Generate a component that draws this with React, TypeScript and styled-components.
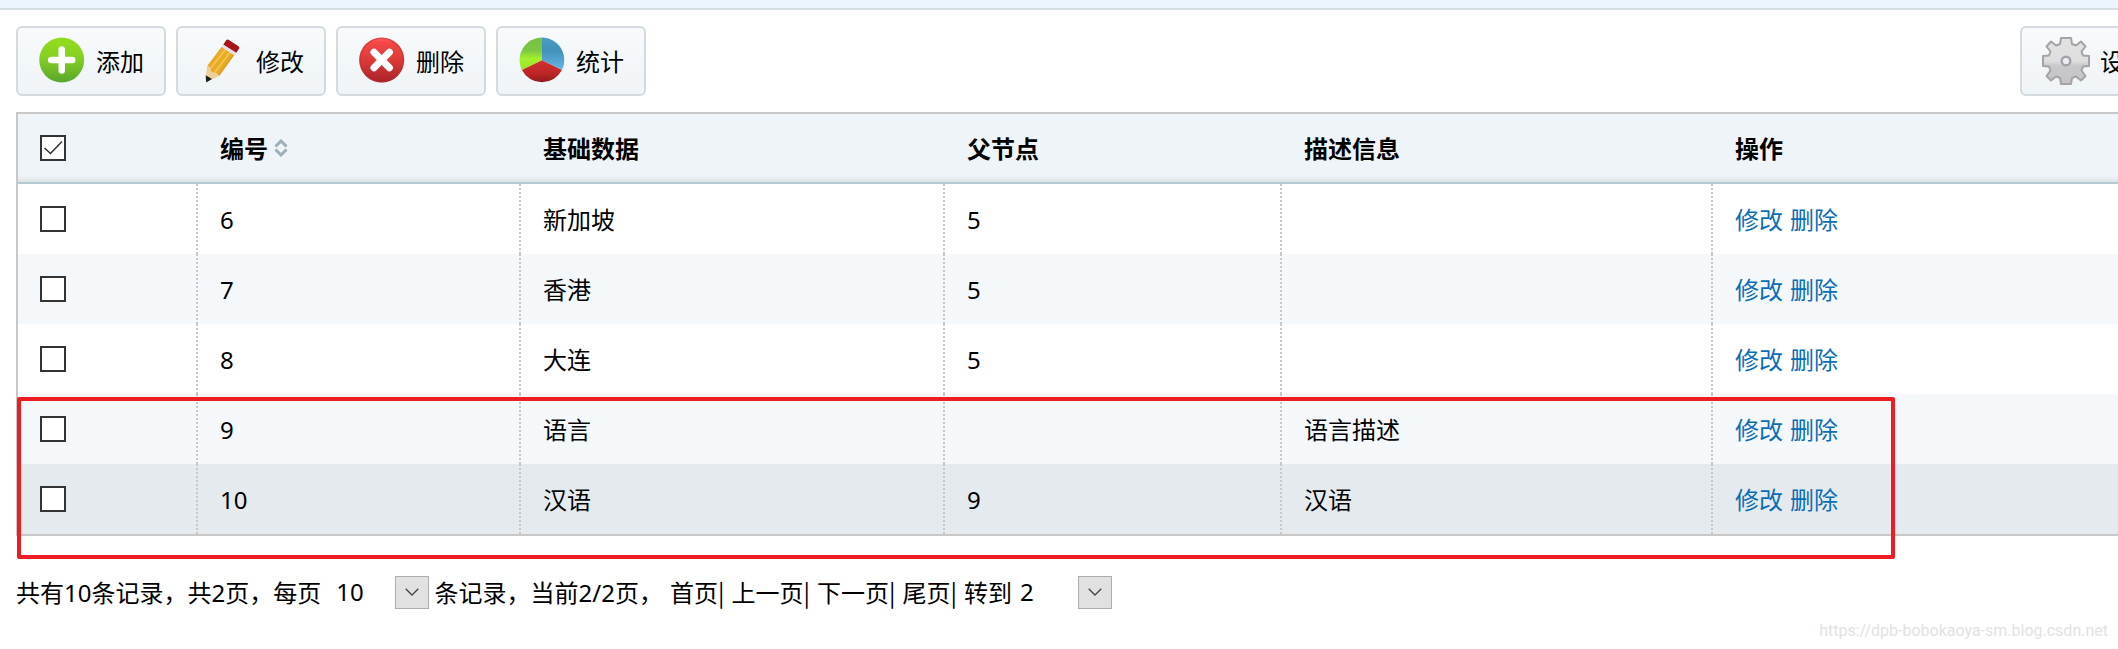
import React, { useState } from "react";
import styled, { createGlobalStyle } from "styled-components";

const GlobalStyle = createGlobalStyle`
  * { box-sizing: border-box; }
  body {
    margin: 0;
    background: #fff;
    color: #000;
    font-family: "Noto Sans CJK SC", "Liberation Sans", sans-serif;
    font-size: 24px;
    line-height: 34px;
  }
  button, select { font: inherit; color: inherit; }
`;

const Page = styled.div`
  position: relative;
  min-height: 100vh;
  overflow: hidden;
`;

const TopStrip = styled.div`
  height: 10px;
  background: #edf5fc;
  border-bottom: 2px solid #d3dfe3;
`;

/* The panel is wider than the viewport and runs off its right edge. */
const Panel = styled.main`
  margin-right: -68px;
  padding: 16px;
`;

const Toolbar = styled.div`
  display: flex;
  gap: 10px;
  margin-bottom: 16px;
`;

const ToolButton = styled.button<{ $end?: boolean }>`
  display: flex;
  align-items: center;
  gap: 10px;
  height: 70px;
  padding: 0 20px;
  border: 2px solid #d3dbde;
  border-radius: 6px;
  background: linear-gradient(#f8fafb, #eff4f7);
  white-space: nowrap;
  cursor: pointer;
  margin-left: ${(p) => (p.$end ? "auto" : "0")};
`;

const Icon = styled.svg`
  display: block;
  flex: none;
  width: 48px;
  height: 48px;
`;

const TableFrame = styled.div`
  position: relative;
  border: 2px solid #c8c8c8;
`;

const DataTable = styled.table`
  width: 100%;
  table-layout: fixed;
  border-collapse: separate;
  border-spacing: 0;
`;

const Col = styled.col<{ $width?: number }>`
  width: ${(p) => (p.$width ? `${p.$width}px` : "auto")};
`;

const HeadCell = styled.th`
  height: 70px;
  padding: 0 22px;
  text-align: left;
  font-weight: 700;
  background: linear-gradient(transparent 62px, #dde2e4 68px), #eef4f7;
  border-bottom: 2px solid #b6cad2;
`;

const SortLabel = styled.span`
  display: flex;
  align-items: center;
  gap: 6px;
`;

const SortIcon = styled.svg`
  width: 14px;
  height: 18px;
`;

const Row = styled.tr<{ $tone: "plain" | "alt" | "hover" }>`
  background: ${(p) => ({ plain: "#fff", alt: "#f4f8fb", hover: "#e5eaee" })[p.$tone]};
`;

const Cell = styled.td`
  height: 70px;
  padding: 0 22px;
  &:not(:last-child) {
    background: repeating-linear-gradient(#c8c8c8 0 2px, transparent 2px 4px) right / 2px 100% no-repeat;
  }
`;

const Num = styled.span`
  font-family: "Noto Sans", "Liberation Sans", sans-serif;
  line-height: 1;
`;

const CheckWrap = styled.label`
  display: grid;
  width: 26px;
  height: 26px;
  > * { grid-area: 1 / 1; }
`;

const CheckBox = styled.input`
  appearance: none;
  width: 26px;
  height: 26px;
  margin: 0;
  border: 2px solid #333;
  background: #fff;
  & + svg { visibility: hidden; pointer-events: none; z-index: 1; }
  &:checked + svg { visibility: visible; }
`;

const ActionLink = styled.a`
  color: #0b6db7;
  text-decoration: none;
  & + & { margin-left: 7px; }
`;

const Highlight = styled.div`
  position: absolute;
  left: -1px;
  right: 273px;
  top: 283px;
  bottom: -25px;
  border: 4px solid #ee1c25;
  border-radius: 2px;
  pointer-events: none;
`;

const Pager = styled.div`
  display: flex;
  align-items: center;
  margin-top: 39px;
  white-space: nowrap;
`;

const PagerText = styled.span<{ $tight?: boolean }>`
  margin-right: ${(p) => (p.$tight ? "0" : "7px")};
`;

const PageLink = styled.a`
  color: inherit;
  text-decoration: none;
`;

const SelectWrap = styled.span<{ $width: number }>`
  display: grid;
  width: ${(p) => p.$width}px;
  align-items: center;
  > * { grid-area: 1 / 1; }
`;

const Select = styled.select`
  appearance: none;
  width: 100%;
  height: 34px;
  padding: 0 40px 0 8px;
  border: 0;
  background: transparent;
  font-family: "Noto Sans", "Liberation Sans", sans-serif;
`;

const SelectArrow = styled.span`
  display: grid;
  place-items: center;
  justify-self: end;
  width: 34px;
  height: 33px;
  border: 1px solid #adadad;
  background: #e1e1e1;
  pointer-events: none;
`;

const Watermark = styled.div`
  position: absolute;
  right: 10px;
  bottom: 6px;
  font-family: Roboto, "Liberation Sans", sans-serif;
  font-size: 16px;
  line-height: 24px;
  color: #e2e2e2;
`;

const AddIcon = () => (
  <Icon viewBox="0 0 48 48" aria-hidden="true">
    <defs>
      <linearGradient id="add" x2="0" y2="1">
        <stop offset="0" stopColor="#93dd1d" />
        <stop offset=".45" stopColor="#86cf22" />
        <stop offset="1" stopColor="#57a62d" />
      </linearGradient>
    </defs>
    <circle cx="23.700" cy="23" r="22.500" fill="url(#add)" />
    <path d="M23.700 12.500v21M13.200 23h21" stroke="#fff" strokeWidth="6.500" strokeLinecap="round" />
  </Icon>
);

const PencilIcon = () => (
  <Icon viewBox="0 0 48 48" aria-hidden="true">
    <path d="M9.300 28.700 21.300 38.700 14 42.500 7.700 38.500z" fill="#efcf98" />
    <path d="M7.700 38.300 14 42 8.200 45.500z" fill="#1c1c1c" />
    <path d="M23.700 9.700 36.300 18 21.300 38.700 17.500 35.500 13.500 35 12.500 31 9.300 28.700z" fill="#e8ac22" />
    <path d="M27.500 12.200 12.500 31.500M32 15.200 17 35" stroke="#f2c458" strokeWidth="1.800" />
    <path d="M36.300 18 21.300 38.700 20 37.500 35 17z" fill="#dba02a" />
    <path d="M25.300 7.500 38 15.800 36.300 18.300 23.700 9.900z" fill="#e3e1e4" />
    <path d="M28 3.500Q29 2 30.500 2.800L40.500 9.300Q42 10.500 41 11.800L38.300 15.800 25.300 7.500z" fill="#a8131a" />
  </Icon>
);

const DeleteIcon = () => (
  <Icon viewBox="0 0 48 48" aria-hidden="true">
    <defs>
      <linearGradient id="del" x2="0" y2="1">
        <stop offset="0" stopColor="#ff6b6b" />
        <stop offset=".1" stopColor="#f64848" />
        <stop offset=".5" stopColor="#dd3939" />
        <stop offset="1" stopColor="#a82328" />
      </linearGradient>
    </defs>
    <circle cx="23.700" cy="23" r="22.500" fill="url(#del)" />
    <circle cx="23.700" cy="23" r="21.800" fill="none" stroke="#b33035" strokeOpacity=".45" strokeWidth="1.400" />
    <path d="m16 15.300 15.400 15.400M31.400 15.300 16 30.700" stroke="#fff" strokeWidth="7" strokeLinecap="round" />
  </Icon>
);

const ChartIcon = () => (
  <Icon viewBox="0 0 48 48" aria-hidden="true">
    <defs>
      <linearGradient id="pieG" x2="0" y2="1">
        <stop offset="0" stopColor="#77c043" />
        <stop offset=".4" stopColor="#7cc843" />
        <stop offset=".65" stopColor="#a5ee2f" />
        <stop offset="1" stopColor="#9be52c" />
      </linearGradient>
      <linearGradient id="pieB" x2="0" y2="1">
        <stop offset="0" stopColor="#4a9cc6" />
        <stop offset=".4" stopColor="#4191bb" />
        <stop offset="1" stopColor="#68b7e3" />
      </linearGradient>
      <linearGradient id="pieR" x2="0" y2="1">
        <stop offset="0" stopColor="#d03232" />
        <stop offset=".6" stopColor="#bd2626" />
        <stop offset="1" stopColor="#931a1c" />
      </linearGradient>
    </defs>
    <path d="M24 23.300V.5A22.500 22.500 0 0 0 3.900 33z" fill="url(#pieG)" />
    <path d="M24 23.300V.5A22.500 22.500 0 0 1 43.900 33z" fill="url(#pieB)" />
    <path d="M24 23.300 43.900 33A22.500 22.500 0 0 1 3.900 33z" fill="url(#pieR)" />
  </Icon>
);

const GearIcon = () => (
  <Icon viewBox="0 0 48 48" aria-hidden="true">
    <defs>
      <linearGradient id="gear" x2="0" y2="1">
        <stop offset="0" stopColor="#e3e3e3" />
        <stop offset=".5" stopColor="#dededf" />
        <stop offset=".6" stopColor="#c9c8ca" />
        <stop offset="1" stopColor="#c4c3c5" />
      </linearGradient>
    </defs>
    <path
      d="M19 1h10l1 6 4 1.500L39 4.500 43.500 9.500 39.500 14.500 41 18.500 47 19v10l-6 .500-1.500 4 4 5.500-4.500 4.500-5-4-4 1.500-1 6H19l-1-6-4-1.500-5 4L4.500 39l4-5.500L7 29.500 1 29V19l6-.500 1.500-4L4.500 9.500 9 4.500 14 8.500 18 7z"
      fill="url(#gear)" stroke="#a4a3a7" strokeWidth="2" strokeLinejoin="round"
    />
    <circle cx="24" cy="24" r="4.300" fill="#eeeef0" stroke="#a4a3ac" strokeWidth="2.400" />
  </Icon>
);

interface CheckProps {
  label: string;
  checked: boolean;
  onChange: () => void;
}

const Check = ({ label, checked, onChange }: CheckProps) => (
  <CheckWrap>
    <CheckBox type="checkbox" aria-label={label} checked={checked} onChange={onChange} />
    <svg width="26" height="26" viewBox="0 0 26 26">
      <path d="m4.500 13 6 5.500L22 6.500" fill="none" stroke="#333" strokeWidth="1.600" />
    </svg>
  </CheckWrap>
);

interface DropDownProps {
  label: string;
  width: number;
  initial: string;
  options: string[];
}

const DropDown = ({ label, width, initial, options }: DropDownProps) => (
  <SelectWrap $width={width}>
    <Select aria-label={label} defaultValue={initial}>
      {options.map((o) => (
        <option key={o}>{o}</option>
      ))}
    </Select>
    <SelectArrow>
      <svg width="14" height="8" viewBox="0 0 14 8">
        <path d="m.7.700 6.300 6.300L13.300.700" fill="none" stroke="#444" strokeWidth="1.300" />
      </svg>
    </SelectArrow>
  </SelectWrap>
);

interface Item {
  id: number;
  name: string;
  parent: string;
  info: string;
}

const items: Item[] = [
  { id: 6, name: "新加坡", parent: "5", info: "" },
  { id: 7, name: "香港", parent: "5", info: "" },
  { id: 8, name: "大连", parent: "5", info: "" },
  { id: 9, name: "语言", parent: "", info: "语言描述" },
  { id: 10, name: "汉语", parent: "9", info: "汉语" },
];

const pageLinks = [
  { href: "#first", text: "首页" },
  { href: "#prev", text: "上一页" },
  { href: "#next", text: "下一页" },
  { href: "#last", text: "尾页" },
];

export default function App() {
  const [headChecked, setHeadChecked] = useState(true);
  const [selected, setSelected] = useState<number[]>([]);

  const toggle = (id: number) =>
    setSelected((s) => (s.includes(id) ? s.filter((x) => x !== id) : [...s, id]));

  return (
    <Page>
      <GlobalStyle />
      <TopStrip />
      <Panel>
        <Toolbar>
          <ToolButton type="button"><AddIcon />添加</ToolButton>
          <ToolButton type="button"><PencilIcon />修改</ToolButton>
          <ToolButton type="button"><DeleteIcon />删除</ToolButton>
          <ToolButton type="button"><ChartIcon />统计</ToolButton>
          <ToolButton type="button" $end><GearIcon />设置</ToolButton>
        </Toolbar>

        <TableFrame>
          <DataTable>
            <colgroup>
              <Col $width={180} />
              <Col $width={323} />
              <Col $width={424} />
              <Col $width={337} />
              <Col $width={431} />
              <Col />
            </colgroup>
            <thead>
              <tr>
                <HeadCell>
                  <Check label="全选" checked={headChecked} onChange={() => setHeadChecked(!headChecked)} />
                </HeadCell>
                <HeadCell>
                  <SortLabel>
                    编号
                    <SortIcon viewBox="0 0 14 18" aria-hidden="true">
                      <path d="m1.500 7.500 5.500-5.500 5.500 5.500M1.500 10.500l5.500 5.500 5.500-5.500" fill="none" stroke="#9db0ba" strokeWidth="3" />
                    </SortIcon>
                  </SortLabel>
                </HeadCell>
                <HeadCell>基础数据</HeadCell>
                <HeadCell>父节点</HeadCell>
                <HeadCell>描述信息</HeadCell>
                <HeadCell>操作</HeadCell>
              </tr>
            </thead>
            <tbody>
              {items.map((item, i) => (
                <Row key={item.id} $tone={item.id === 10 ? "hover" : i % 2 ? "alt" : "plain"}>
                  <Cell>
                    <Check label={item.name} checked={selected.includes(item.id)} onChange={() => toggle(item.id)} />
                  </Cell>
                  <Cell><Num>{item.id}</Num></Cell>
                  <Cell>{item.name}</Cell>
                  <Cell><Num>{item.parent}</Num></Cell>
                  <Cell>{item.info}</Cell>
                  <Cell>
                    <ActionLink href="#edit">修改</ActionLink>
                    <ActionLink href="#delete">删除</ActionLink>
                  </Cell>
                </Row>
              ))}
            </tbody>
          </DataTable>
          <Highlight />
        </TableFrame>

        <Pager>
          <PagerText>共有<Num>10</Num>条记录，共<Num>2</Num>页，每页</PagerText>
          <DropDown label="每页条数" width={101} initial="10" options={["10", "20", "50"]} />
          <PagerText $tight>&nbsp;</PagerText>
          <PagerText>条记录，当前<Num>2/2</Num>页，</PagerText>
          {pageLinks.map((link) => (
            <React.Fragment key={link.href}>
              <PageLink href={link.href}>{link.text}</PageLink>
              <PagerText>|</PagerText>
            </React.Fragment>
          ))}
          <PagerText $tight>转到</PagerText>
          <DropDown label="转到页" width={100} initial="2" options={["1", "2"]} />
        </Pager>
      </Panel>
      <Watermark>https://dpb-bobokaoya-sm.blog.csdn.net</Watermark>
    </Page>
  );
}
